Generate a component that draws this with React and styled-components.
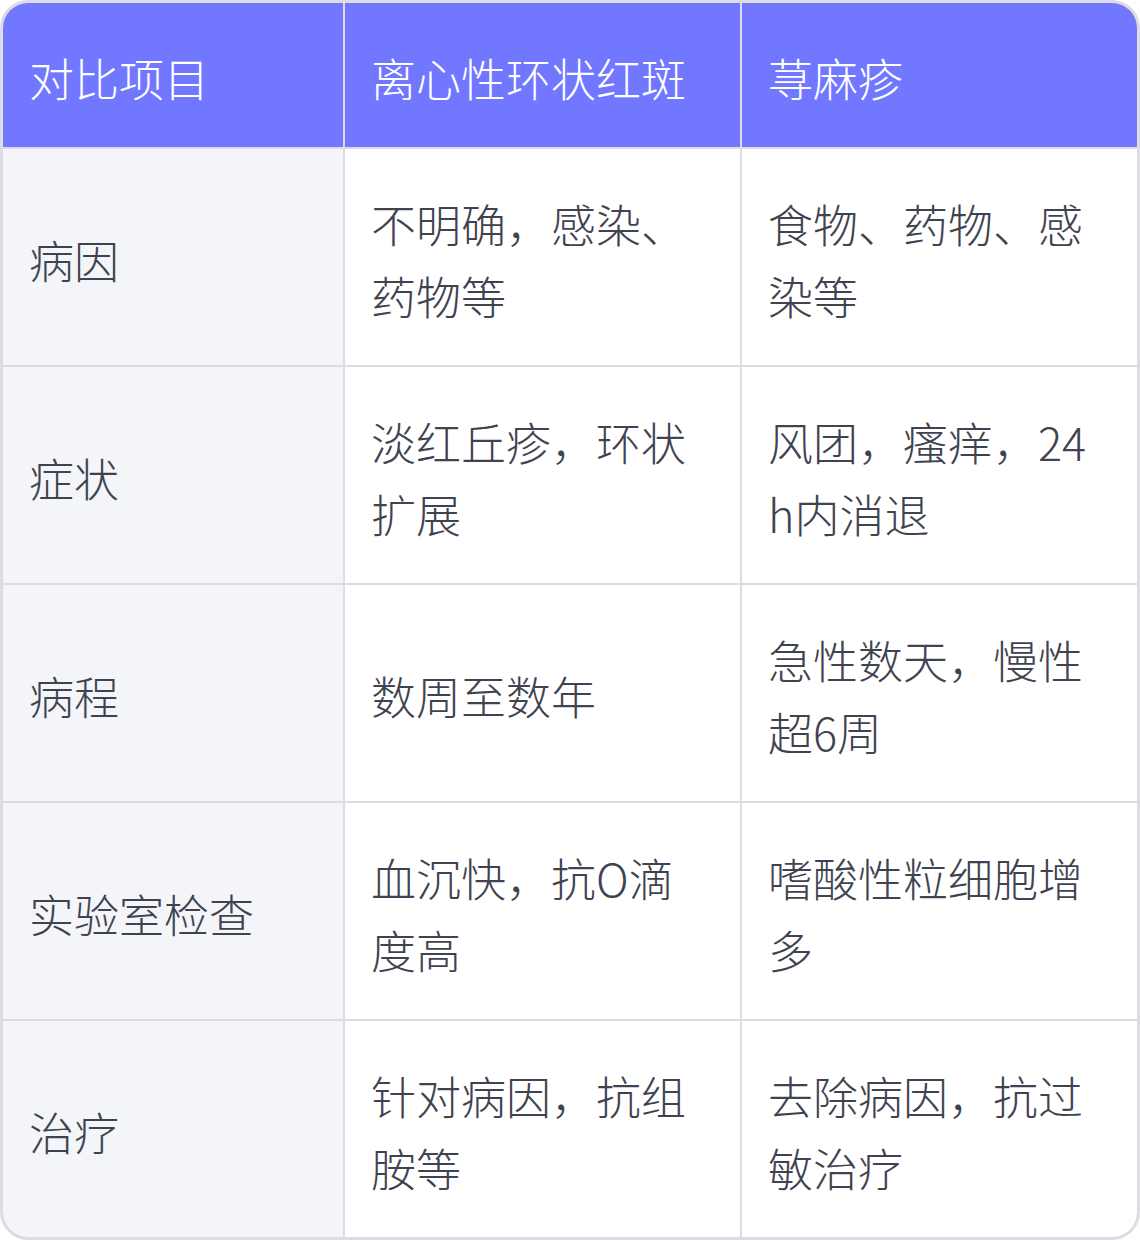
import React from "react";
import styled, { createGlobalStyle } from "styled-components";

const Global = createGlobalStyle`
  html, body { margin: 0; padding: 0; background: #ffffff; }
  body { font-family: "Noto Sans CJK SC", "Noto Sans", sans-serif; }
  * { box-sizing: border-box; }
`;

const Table = styled.div`
  width: 1140px;
  display: grid;
  grid-template-columns: 340px 395px 395px;
  gap: 2px;
  background: #dcdce2;
  border: 3px solid #dcdce2;
  border-radius: 28px;
  overflow: hidden;
`;

const Cell = styled.div`
  display: flex;
  align-items: center;
  padding: 39px 26px 33px;
  font-size: 45px;
  line-height: 72px;
  font-weight: 300;
  word-break: break-all;
  color: ${(p) => (p.$head ? "#ffffff" : "#3f4350")};
  background: ${(p) => (p.$head ? "#7177ff" : p.$first ? "#f4f5f9" : "#ffffff")};
`;

const head = ["对比项目", "离心性环状红斑", "荨麻疹"];
const rows = [
  ["病因", "不明确，感染、药物等", "食物、药物、感染等"],
  ["症状", "淡红丘疹，环状扩展", "风团，瘙痒，24h内消退"],
  ["病程", "数周至数年", "急性数天，慢性超6周"],
  ["实验室检查", "血沉快，抗O滴度高", "嗜酸性粒细胞增多"],
  ["治疗", "针对病因，抗组胺等", "去除病因，抗过敏治疗"],
];

export default function App() {
  return (
    <>
      <Global />
      <Table>
        {head.map((h) => (
          <Cell key={h} $head>
            {h}
          </Cell>
        ))}
        {rows.map((r) =>
          r.map((c, i) => (
            <Cell key={r[0] + i} $first={i === 0}>
              {c}
            </Cell>
          ))
        )}
      </Table>
    </>
  );
}
